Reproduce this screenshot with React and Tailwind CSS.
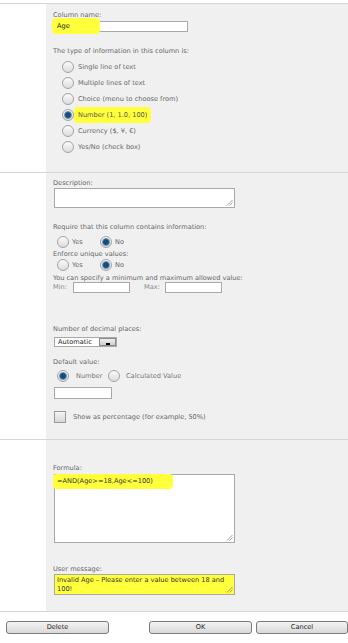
import React from 'react';

const FONT = { fontFamily: '"DejaVu Sans", Verdana, sans-serif' };

const Label = ({ children, className = '' }) => (
  <div className={`h-[8px] leading-[8px] text-[6.6px] text-[#666] whitespace-nowrap ${className}`}>{children}</div>
);

const Radio = ({ checked }) => (
  <span className="w-[12px] h-[12px] rounded-full border border-[#a3a3a3] bg-gradient-to-b from-[#fbfbfb] to-[#dcdcdc] flex items-center justify-center shrink-0">
    {checked && (
      <span className="w-[8px] h-[8px] rounded-full border border-[#6f9cc8] bg-[#1a4a76]" />
    )}
  </span>
);

const Grip = () => (
  <svg className="absolute right-[1px] bottom-[1px]" width="7" height="7" viewBox="0 0 7 7">
    <line x1="6.5" y1="1" x2="1" y2="6.5" stroke="#888" strokeWidth="0.8" />
    <line x1="6.5" y1="3.5" x2="3.5" y2="6.5" stroke="#888" strokeWidth="0.8" />
  </svg>
);

const TYPES = [
  'Single line of text',
  'Multiple lines of text',
  'Choice (menu to choose from)',
  'Number (1, 1.0, 100)',
  'Currency ($, ¥, €)',
  'Yes/No (check box)',
];

const Section = ({ height, children }) => (
  <div className="flex border-t border-[#d6d6d6]">
    <div className="w-[46px] shrink-0 bg-white" />
    <div className={`flex-1 bg-[#f0f0f0] pl-[7px] ${height}`}>{children}</div>
  </div>
);

const Btn = ({ children, className }) => (
  <button className={`h-[13px] rounded-[3px] border border-[#7a7a7a] bg-gradient-to-b from-[#f4f4f4] to-[#d9d9d9] text-[6.6px] leading-[11px] text-[#222] ${className}`}>
    {children}
  </button>
);

export default function App() {
  return (
    <div style={FONT} className="w-[348px] h-[643px] bg-white pt-[3px] overflow-hidden">
      <Section height="h-[168px] pt-[7px]">
        <Label>Column name:</Label>
        <div className="relative mt-[2px] w-[135px] h-[11px] border border-[#a9a9a9] bg-white">
          <span className="absolute -left-[2px] -top-[4px] w-[48px] h-[16px] rounded-[4px] bg-[#ffff3c] pl-[5px] text-[6.6px] leading-[16px] text-[#222]">Age</span>
        </div>
        <Label className="mt-[15px]">The type of information in this column is:</Label>
        <div className="mt-[4px]">
          {TYPES.map((t, i) => (
            <div key={t} className="flex items-center h-[16px] pl-[9px]">
              <Radio checked={i === 3} />
              {i === 3 ? (
                <span className="px-[4px] py-[4px] rounded-[4px] bg-[#ffff3c] text-[6.6px] leading-[8px] text-[#555]">{t}</span>
              ) : (
                <span className="ml-[4px] text-[6.6px] leading-[8px] text-[#666]">{t}</span>
              )}
            </div>
          ))}
        </div>
      </Section>

      <Section height="h-[266px] pt-[6px]">
        <Label>Description:</Label>
        <div className="relative mt-[1px] ml-[1px] w-[181px] h-[20px] border border-[#a9a9a9] bg-white">
          <Grip />
        </div>
        <Label className="mt-[15px]">Require that this column contains information:</Label>
        <div className="mt-[5px] flex items-center h-[12px] pl-[4px]">
          <Radio />
          <span className="ml-[3px] w-[28px] text-[6.6px] leading-[8px] text-[#666]">Yes</span>
          <Radio checked />
          <span className="ml-[3px] text-[6.6px] leading-[8px] text-[#666]">No</span>
        </div>
        <Label className="mt-[2px]">Enforce unique values:</Label>
        <div className="mt-[1px] flex items-center h-[12px] pl-[4px]">
          <Radio />
          <span className="ml-[3px] w-[28px] text-[6.6px] leading-[8px] text-[#666]">Yes</span>
          <Radio checked />
          <span className="ml-[3px] text-[6.6px] leading-[8px] text-[#666]">No</span>
        </div>
        <Label className="mt-[3px]">You can specify a minimum and maximum allowed value:</Label>
        <div className="flex items-center h-[11px] text-[6.6px] text-[#888]">
          <span className="w-[20px]">Min:</span>
          <span className="w-[57px] h-[11px] border border-[#a9a9a9] bg-white" />
          <span className="ml-[14px] w-[21px]">Max:</span>
          <span className="w-[57px] h-[11px] border border-[#a9a9a9] bg-white" />
        </div>
        <Label className="mt-[32px]">Number of decimal places:</Label>
        <div className="mt-[4px] ml-[1px] flex items-center w-[63px] h-[10px] border border-[#a9a9a9] bg-white">
          <span className="flex-1 pl-[3px] text-[6.6px] leading-[8px] text-[#222]">Automatic</span>
          <span className="relative w-[17px] h-[8px] border border-[#8a8a8a] bg-gradient-to-b from-[#f0f0f0] to-[#cfcfcf]">
            <span className="absolute left-[6px] bottom-[0px] w-[4px] h-[2px] bg-black" />
          </span>
        </div>
        <Label className="mt-[11px]">Default value:</Label>
        <div className="mt-[4px] flex items-center h-[12px] pl-[4px]">
          <Radio checked />
          <span className="ml-[7px] w-[32px] text-[6.6px] leading-[8px] text-[#777]">Number</span>
          <Radio />
          <span className="ml-[6px] text-[6.6px] leading-[8px] text-[#777]">Calculated Value</span>
        </div>
        <div className="mt-[5px] ml-[1px] w-[58px] h-[12px] border border-[#a9a9a9] bg-white" />
        <div className="mt-[12px] ml-[1px] flex items-center">
          <span className="w-[12px] h-[12px] border border-[#9a9a9a] bg-gradient-to-b from-[#f6f6f6] to-[#d6d6d6]" />
          <span className="ml-[7px] text-[6.6px] leading-[8px] text-[#666]">Show as percentage (for example, 50%)</span>
        </div>
      </Section>

      <Section height="h-[171px] pt-[24px]">
        <Label>Formula:</Label>
        <div className="relative mt-[2px] ml-[1px] w-[181px] h-[69px] border border-[#a9a9a9] bg-white">
          <span className="absolute -left-[2px] -top-[1px] w-[120px] h-[15px] rounded-[4px] bg-[#ffff3c] pl-[4px] text-[6.6px] leading-[15px] text-[#333]">=AND(Age&gt;=18,Age&lt;=100)</span>
          <Grip />
        </div>
        <Label className="mt-[22px]">User message:</Label>
        <div className="relative mt-[1px] ml-[1px] w-[181px] h-[21px] border border-[#a9a9a9] bg-[#ffff3c] pl-[2px] pt-[1px] text-[6.6px] leading-[9px] text-[#333]">
          Invalid Age – Please enter a value between 18 and<br />100!
          <Grip />
        </div>
      </Section>

      <div className="border-t border-[#d6d6d6] flex pt-[9px]">
        <Btn className="ml-[6px] w-[103px]">Delete</Btn>
        <Btn className="ml-[40px] w-[103px]">OK</Btn>
        <Btn className="ml-[4px] w-[92px]">Cancel</Btn>
      </div>
    </div>
  );
}
